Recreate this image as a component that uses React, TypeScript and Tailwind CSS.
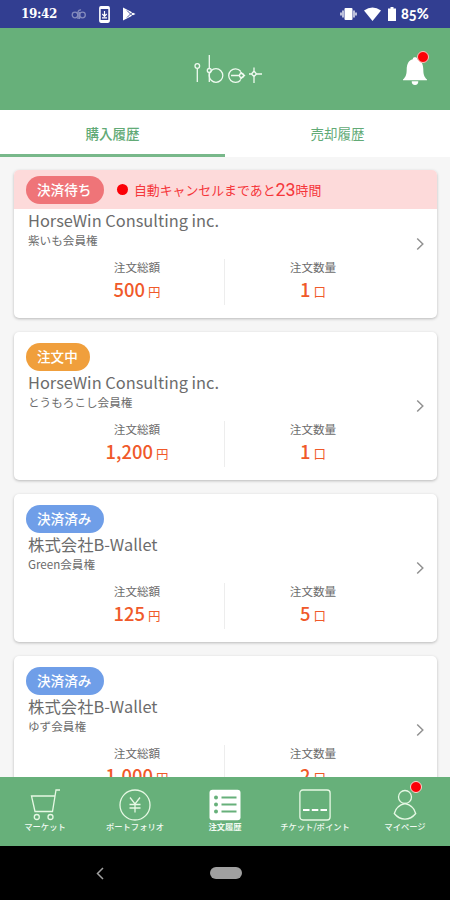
import React from 'react';

type Order = {
    id: number;
    status: string;
    statusColor: string;
    alert?: boolean;
    company: string;
    product: string;
    total: string;
    count: string;
};

const orders: Order[] = [
    { id: 1, status: '決済待ち', statusColor: 'bg-[#ef7478]', alert: true, company: 'HorseWin Consulting inc.', product: '紫いも会員権', total: '500', count: '1' },
    { id: 2, status: '注文中', statusColor: 'bg-[#f09f3c]', company: 'HorseWin Consulting inc.', product: 'とうもろこし会員権', total: '1,200', count: '1' },
    { id: 3, status: '決済済み', statusColor: 'bg-[#6f9ee8]', company: '株式会社B-Wallet', product: 'Green会員権', total: '125', count: '5' },
    { id: 4, status: '決済済み', statusColor: 'bg-[#6f9ee8]', company: '株式会社B-Wallet', product: 'ゆず会員権', total: '1,000', count: '2' },
];

function StatusBar() {
    return (
        <div className="h-7 shrink-0 bg-[#323e91] text-white flex items-center justify-between pl-[21px] pr-5">
            <div className="flex items-center h-7">
                <span className="w-[38px] whitespace-nowrap font-['DejaVu_Serif','Liberation_Serif',serif] font-bold text-[12px] tracking-[-0.4px] leading-7">19:42</span>
                <svg width="16" height="14" viewBox="0 0 16 14" className="ml-3 opacity-40" fill="none" stroke="white" strokeWidth="1.3">
                    <circle cx="4" cy="8" r="2.8" />
                    <circle cx="11.5" cy="8" r="2.8" />
                    <path d="M7 12V5a2.500 2.500 0 0 1 3-2M8.500 5v7" />
                </svg>
                <svg width="11" height="17" viewBox="0 0 11 17" className="ml-[12px]">
                    <rect x="0.900" y="0.900" width="9.200" height="15.200" rx="1" fill="none" stroke="white" strokeWidth="1.600" />
                    <path d="M1 2h9M1 15h9" stroke="white" strokeWidth="2.200" />
                    <path d="M5.500 5v5M3.300 8l2.200 2.400L7.700 8M3 11.800h5" fill="none" stroke="white" strokeWidth="1.200" />
                </svg>
                <svg width="14" height="14" viewBox="0 0 14 14" className="ml-[12px]">
                    <path d="M1 0.500L13.500 7 1 13.500z" fill="white" />
                    <path d="M5 3.500L8.500 7 5 10.500M11 5L8.500 7l2.500 2" fill="none" stroke="#323e91" strokeWidth="0.900" />
                </svg>
            </div>
            <div className="flex items-center h-7">
                <svg width="17" height="14" viewBox="0 0 17 14">
                    <rect x="4.500" y="1" width="8" height="12" rx="1" fill="white" />
                    <path d="M3 3.500v7M14 3.500v7M1 5.500v3M16 5.500v3" stroke="white" strokeWidth="1.800" opacity="0.750" />
                </svg>
                <svg width="17" height="14" viewBox="0 0 17 14" className="ml-[7px]">
                    <path d="M0 3.500Q8.500-2.500 17 3.500L8.500 14z" fill="white" />
                </svg>
                <svg width="8" height="14" viewBox="0 0 8 14" className="ml-[7px]">
                    <path d="M2.500 0h3v1.500H8V14H0V1.500h2.500z" fill="white" />
                </svg>
                <span className="ml-[5px] w-[29px] whitespace-nowrap font-['Lato',sans-serif] font-black oldstyle-nums text-[14.500px] leading-7">85%</span>
            </div>
        </div>
    );
}

function Header() {
    return (
        <header className="h-[82px] shrink-0 bg-[#67b07a] flex items-center justify-between">
            <div className="w-[50px]" />
            <svg width="72" height="32" viewBox="191 53 72 32" className="ml-[5px]" fill="none" stroke="#effaf0" strokeWidth="1.300">
                <circle cx="196.300" cy="66" r="2.300" />
                <path d="M196.300 68.500v13.500" />
                <path d="M208.300 55v13.500M208.300 72.500V82" />
                <circle cx="208.300" cy="70.500" r="2" />
                <circle cx="215" cy="75.500" r="6.800" />
                <path d="M239.500 71a6.800 6.800 0 1 0 0 9.200M230 75.500h8.500" />
                <circle cx="240.500" cy="75.500" r="2" />
                <path d="M239 71.500l4.500 4-4.500 4" />
                <path d="M253 67.500v3.500l2.500 3h5.500M248 74h2.500l2.500-3M250.500 74l2.500 2.500 2.500-2.500M253 76.500V83" />
            </svg>
            <button className="relative w-[50px] h-10">
                <svg width="26" height="30" viewBox="402 54 26 30" className="mt-[3px] ml-[2px]" fill="white">
                    <path d="M415 55c-1.500 0-2.200 1-2.200 2.200-4.300 1.200-6 5-6.100 10-.1 4.800-.5 7.300-3.700 10.300v.7h24v-.7c-3.200-3-3.600-5.500-3.700-10.300-.1-5-1.800-8.800-6.100-10 0-1.200-.7-2.200-2.200-2.200z" />
                    <path d="M411.700 79.200h6.600a3.300 3.800 0 0 1-6.600 0z" />
                </svg>
                <span className="absolute left-[17px] top-[2px] size-3 rounded-full bg-[#fb0007] border border-[#f8c3bd]" />
            </button>
        </header>
    );
}

function OrderCard({ order }: { order: Order }) {
    return (
        <article className="h-[148px] shrink-0 bg-white rounded-[5px] shadow-[0_1px_3px_rgba(0,0,0,0.25)] overflow-hidden">
            <div className={order.alert ? 'h-[39px] flex items-center pl-3 bg-[#fddada]' : 'h-[39px] flex items-end pl-3'}>
                <span className={`h-7 pl-[11px] pr-[12.500px] rounded-full text-white font-medium text-[13.600px] leading-[26px] ${order.statusColor}`}>
                    {order.status}
                </span>
                {order.alert && (
                    <p className="flex items-center text-[#f5363b] text-[12.900px] leading-[39px] whitespace-nowrap">
                        <span className="ml-[13px] mr-[6px] size-[11px] rounded-full bg-[#fb0007]" />
                        自動キャンセルまであと
                        <span className="font-['Roboto',sans-serif] text-[17.800px]">23</span>
                        時間
                    </p>
                )}
            </div>
            <div className="relative pl-[14px]">
                <h2 className="text-[16.400px] leading-[23px] text-[#6c6c6c]">{order.company}</h2>
                <p className="text-[11.600px] leading-4 text-[#6c6c6c]">{order.product}</p>
                <svg width="8" height="14" viewBox="0 0 8 14" className="absolute right-[13px] top-[28px]" fill="none" stroke="#929292" strokeWidth="1.500">
                    <path d="M1.200 1.500L6.800 7l-5.600 5.500" />
                </svg>
            </div>
            <div className="flex mt-[11px] px-9">
                <div className="w-[175px] h-[46px] border-r border-[#ededed] text-center">
                    <div className="text-[11.600px] leading-[17px] text-[#6c6c6c]">注文総額</div>
                    <div className="text-[#f0592a] leading-[26px] whitespace-nowrap">
                        <span className="text-[18.400px] font-medium">{order.total}</span>
                        <span className="text-[12.500px] ml-[3px]">円</span>
                    </div>
                </div>
                <div className="w-[176px] shrink-0 text-center">
                    <div className="text-[11.600px] leading-[17px] text-[#6c6c6c]">注文数量</div>
                    <div className="text-[#f0592a] leading-[26px] whitespace-nowrap">
                        <span className="text-[18.400px] font-medium">{order.count}</span>
                        <span className="text-[12.500px] ml-[3px]">口</span>
                    </div>
                </div>
            </div>
        </article>
    );
}

function NavItem({ label, active, badge, children }: { label: string; active?: boolean; badge?: boolean; children: React.ReactNode }) {
    return (
        <button className="relative w-[90px] flex flex-col items-center pt-[11.500px] text-[#f1faf2]">
            <svg width="32" height="32" viewBox="0 0 32 32" fill="none" stroke="#e6f8e4" strokeWidth="1.300">
                {children}
            </svg>
            <span className={`text-[8.300px] leading-[11px] whitespace-nowrap ${active ? 'font-bold' : 'font-medium'}`}>{label}</span>
            {badge && <span className="absolute left-[50px] top-[4px] size-3 rounded-full bg-[#fb0007] border border-[#fbd9d3]" />}
        </button>
    );
}

function BottomNav() {
    return (
        <nav className="h-[69px] shrink-0 bg-[#67b07a] flex">
            <NavItem label="マーケット">
                <path d="M31 1h-4l-3.500 21.500H6L2.500 7h23" />
                <circle cx="7.800" cy="28" r="2.500" />
                <circle cx="21.500" cy="28" r="2.500" />
            </NavItem>
            <NavItem label="ポートフォリオ">
                <circle cx="16" cy="16" r="15" />
                <path d="M11 8.500l5 6.500 5-6.500M16 15v8.500M10.500 15.500h11M10.500 19h11" />
            </NavItem>
            <NavItem label="注文履歴" active>
                <rect x="0.500" y="0.700" width="31" height="30.600" rx="3" fill="white" stroke="none" />
                <path d="M12.500 8.500h15M12.500 15.500h15M12.500 22.500h15" stroke="#67b07a" strokeWidth="2" />
                <g fill="#67b07a" stroke="none">
                    <circle cx="7" cy="8.500" r="2" />
                    <circle cx="7" cy="15.500" r="2" />
                    <circle cx="7" cy="22.500" r="2" />
                </g>
            </NavItem>
            <NavItem label="チケット/ポイント">
                <rect x="0.900" y="1" width="30.200" height="30" rx="3" />
                <path d="M4 21h6.500M12.800 21h6.500M21.500 21H28" stroke="white" strokeWidth="2" />
            </NavItem>
            <NavItem label="マイページ" badge>
                <circle cx="16" cy="8" r="6.500" />
                <path d="M16 14.500C10.500 15.800 6.500 19.500 5.300 24.500c6 7.500 15.400 7.500 21.400 0C25.500 19.500 21.500 15.800 16 14.500z" />
            </NavItem>
        </nav>
    );
}

function App() {
    return (
        <div className="w-[450px] h-[900px] overflow-hidden flex flex-col bg-[#f6f6f6] font-['Noto_Sans_CJK_JP',sans-serif]">
            <StatusBar />
            <Header />
            <div className="h-[47px] shrink-0 flex bg-white text-[#62aa76] text-[13.500px] text-center leading-[46px]">
                <div className="w-1/2 h-[47px] border-b-[3px] border-[#78b88a] font-medium">購入履歴</div>
                <div className="w-1/2">売却履歴</div>
            </div>
            <main className="flex-1 min-h-0 overflow-hidden flex flex-col gap-[14px] pt-[13px] pl-[14px] pr-[13px]">
                {orders.map((order) => (
                    <OrderCard key={order.id} order={order} />
                ))}
            </main>
            <BottomNav />
            <div className="h-[54px] shrink-0 bg-black flex items-center">
                <svg width="8" height="13" viewBox="0 0 8 13" className="ml-24" fill="none" stroke="#a0a0a0" strokeWidth="1.500">
                    <path d="M7 1L1.500 6.500 7 12" />
                </svg>
                <div className="ml-[106px] w-8 h-3 rounded-full bg-[#a0a0a0]" />
            </div>
        </div>
    );
}

export default App;
